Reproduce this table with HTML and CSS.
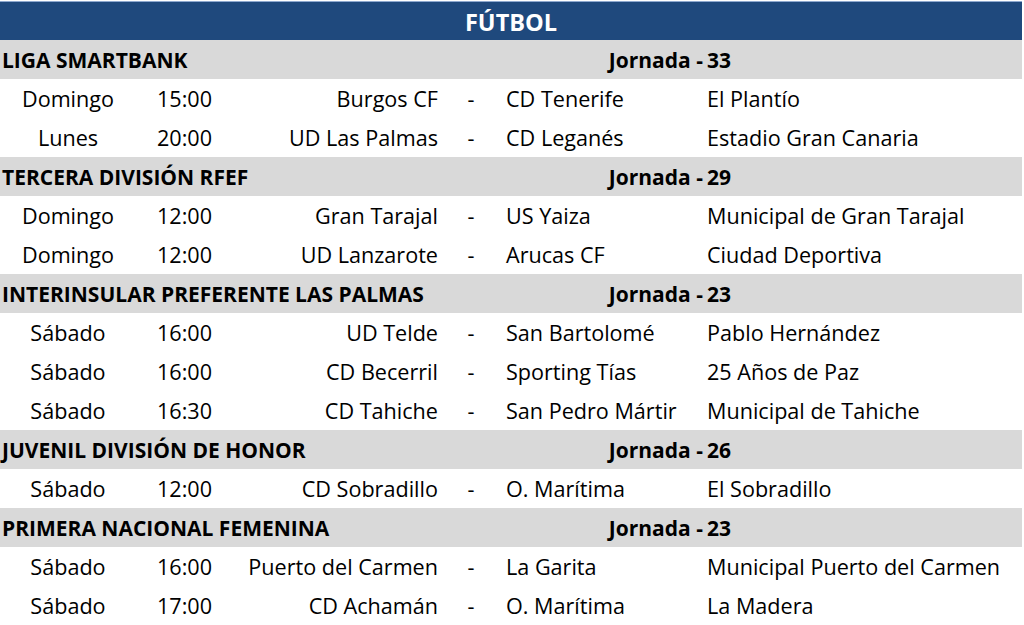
FILE: index.html
```html
<!DOCTYPE html>
<html lang="es">
<head>
<meta charset="utf-8">
<title>Fútbol</title>
<link rel="stylesheet" href="styles.css">
</head>
<body>
<div class="table">
  <div class="head">FÚTBOL</div>

  <div class="sec"><span class="title">LIGA SMARTBANK</span><span class="jl">Jornada -</span><span class="jn">33</span></div>
  <div class="row"><span class="day">Domingo</span><span class="time">15:00</span><span class="home">Burgos CF</span><span class="dash">-</span><span class="away">CD Tenerife</span><span class="venue">El Plantío</span></div>
  <div class="row"><span class="day">Lunes</span><span class="time">20:00</span><span class="home">UD Las Palmas</span><span class="dash">-</span><span class="away">CD Leganés</span><span class="venue">Estadio Gran Canaria</span></div>

  <div class="sec"><span class="title">TERCERA DIVISIÓN RFEF</span><span class="jl">Jornada -</span><span class="jn">29</span></div>
  <div class="row"><span class="day">Domingo</span><span class="time">12:00</span><span class="home">Gran Tarajal</span><span class="dash">-</span><span class="away">US Yaiza</span><span class="venue">Municipal de Gran Tarajal</span></div>
  <div class="row"><span class="day">Domingo</span><span class="time">12:00</span><span class="home">UD Lanzarote</span><span class="dash">-</span><span class="away">Arucas CF</span><span class="venue">Ciudad Deportiva</span></div>

  <div class="sec"><span class="title">INTERINSULAR PREFERENTE LAS PALMAS</span><span class="jl">Jornada -</span><span class="jn">23</span></div>
  <div class="row"><span class="day">Sábado</span><span class="time">16:00</span><span class="home">UD Telde</span><span class="dash">-</span><span class="away">San Bartolomé</span><span class="venue">Pablo Hernández</span></div>
  <div class="row"><span class="day">Sábado</span><span class="time">16:00</span><span class="home">CD Becerril</span><span class="dash">-</span><span class="away">Sporting Tías</span><span class="venue">25 Años de Paz</span></div>
  <div class="row"><span class="day">Sábado</span><span class="time">16:30</span><span class="home">CD Tahiche</span><span class="dash">-</span><span class="away">San Pedro Mártir</span><span class="venue">Municipal de Tahiche</span></div>

  <div class="sec"><span class="title">JUVENIL DIVISIÓN DE HONOR</span><span class="jl">Jornada -</span><span class="jn">26</span></div>
  <div class="row"><span class="day">Sábado</span><span class="time">12:00</span><span class="home">CD Sobradillo</span><span class="dash">-</span><span class="away">O. Marítima</span><span class="venue">El Sobradillo</span></div>

  <div class="sec"><span class="title">PRIMERA NACIONAL FEMENINA</span><span class="jl">Jornada -</span><span class="jn">23</span></div>
  <div class="row"><span class="day">Sábado</span><span class="time">16:00</span><span class="home">Puerto del Carmen</span><span class="dash">-</span><span class="away">La Garita</span><span class="venue">Municipal Puerto del Carmen</span></div>
  <div class="row"><span class="day">Sábado</span><span class="time">17:00</span><span class="home">CD Achamán</span><span class="dash">-</span><span class="away">O. Marítima</span><span class="venue">La Madera</span></div>
</div>
</body>
</html>
```
FILE: styles.css
```css
html, body {
  margin: 0;
  padding: 0;
  background: #ffffff;
}
body {
  width: 1024px;
  height: 625px;
  overflow: hidden;
  font-family: "Open Sans", "Liberation Sans", sans-serif;
  font-size: 21.6px;
  color: #000000;
}
.table {
  display: flex;
  flex-direction: column;
  width: 1024px;
}
.head {
  height: 38px;
  margin-top: 1px;
  border-top: 1px solid #8ea9cf;
  margin-right: 2px;
  background: #1f497d;
  color: #ffffff;
  font-weight: 700;
  font-size: 23.5px;
  text-align: center;
  line-height: 40px;
}
.sec {
  height: 39px;
  margin-right: 2px;
  background: #d9d9d9;
  display: grid;
  grid-template-columns: 1fr auto 319px;
  align-items: center;
  font-weight: 700;
  font-size: 21px;
}
.sec .title {
  padding-left: 2px;
  white-space: nowrap;
}
.sec .jn {
  padding-left: 4px;
}
.row {
  height: 39px;
  display: grid;
  grid-template-columns: 136px 100px 205px 60px 200px 1fr;
  align-items: center;
  white-space: nowrap;
}
.day {
  text-align: center;
}
.time {
  padding-left: 21px;
}
.home {
  text-align: right;
  padding-right: 3px;
}
.dash {
  text-align: center;
}
.away {
  padding-left: 5px;
}
.venue {
  padding-left: 6px;
}
```
